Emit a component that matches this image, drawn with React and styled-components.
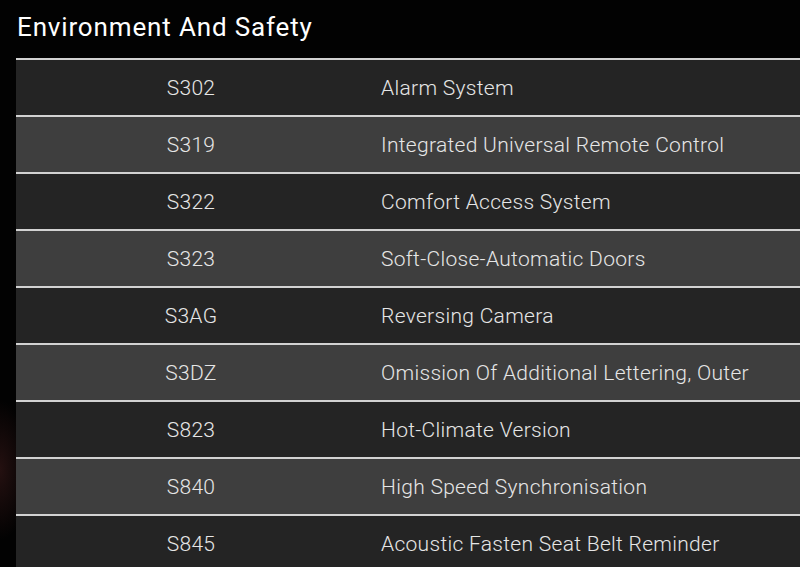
import React from "react";
import styled, { createGlobalStyle } from "styled-components";

const Global = createGlobalStyle`
	html, body {
		margin: 0;
		padding: 0;
		background: #020202;
		overflow: hidden;
	}
	body {
		font-family: Roboto, "Liberation Sans", sans-serif;
	}
`;

const Page = styled.div`
	width: 800px;
	height: 567px;
	overflow: hidden;
	background:
		radial-gradient(ellipse 30px 70px at 0px 470px, rgba(70, 30, 30, 0.5), transparent),
		#020202;
`;

const Title = styled.h2`
	margin: 0;
	height: 58px;
	padding: 0 17px;
	font-size: 26px;
	font-weight: 400;
	letter-spacing: 0.85px;
	line-height: 55px;
	color: #ffffff;
`;

const Table = styled.div`
	margin-left: 16px;
	display: flex;
	flex-direction: column;
`;

const Row = styled.div`
	display: flex;
	align-items: center;
	height: 55px;
	border-top: 2px solid #d2d2d2;
	background: ${(p) => (p.$alt ? "#3e3e3e" : "#242424")};
	color: #e6e6e6;
	font-size: 21px;
	font-weight: 300;
	letter-spacing: 0.3px;
`;

const Code = styled.div`
	width: 350px;
	text-align: center;
`;

const Desc = styled.div`
	flex: 1;
	padding-left: 15px;
`;

const items = [
	["S302", "Alarm System"],
	["S319", "Integrated Universal Remote Control"],
	["S322", "Comfort Access System"],
	["S323", "Soft-Close-Automatic Doors"],
	["S3AG", "Reversing Camera"],
	["S3DZ", "Omission Of Additional Lettering, Outer"],
	["S823", "Hot-Climate Version"],
	["S840", "High Speed Synchronisation"],
	["S845", "Acoustic Fasten Seat Belt Reminder"],
];

const App = () => {
	return (
		<Page>
			<Global />
			<Title>Environment And Safety</Title>
			<Table>
				{items.map(([code, desc], i) => (
					<Row key={code} $alt={i % 2 === 1}>
						<Code>{code}</Code>
						<Desc>{desc}</Desc>
					</Row>
				))}
			</Table>
		</Page>
	);
};

export default App;
